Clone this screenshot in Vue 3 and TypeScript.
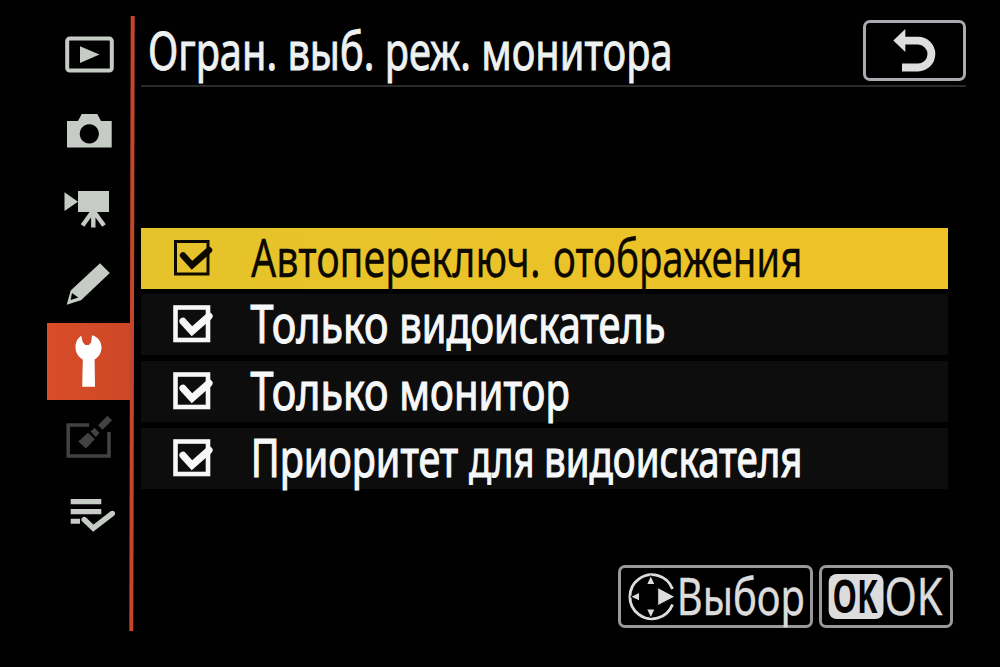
<script setup lang="ts">
interface Word {
  text: string
  x: number
  width: number
}

interface Option {
  id: string
  words: Word[]
  active?: boolean
}

const options: Option[] = [
  {
    id: 'auto',
    active: true,
    words: [
      { text: 'Автопереключ.', x: 4, width: 289.5 },
      { text: 'отображения', x: 306, width: 249.5 },
    ],
  },
  {
    id: 'viewfinder',
    words: [
      { text: 'Только', x: 3.5, width: 138 },
      { text: 'видоискатель', x: 152.3, width: 266 },
    ],
  },
  {
    id: 'monitor',
    words: [
      { text: 'Только', x: 3.5, width: 138 },
      { text: 'монитор', x: 152.3, width: 170.5 },
    ],
  },
  {
    id: 'priority',
    words: [
      { text: 'Приоритет', x: 3.7, width: 207.5 },
      { text: 'для', x: 222, width: 65.5 },
      { text: 'видоискателя', x: 297, width: 258.5 },
    ],
  },
]
</script>

<template>
  <div class="screen">
    <nav class="tabs">
      <div class="tab">
        <svg viewBox="0 0 83 77">
          <rect x="20.2" y="23.6" width="44.6" height="32" rx="2.5" fill="none" stroke="#c6cbc6" stroke-width="4" />
          <path d="M33 31.2L52.5 39.5L33 48Z" />
        </svg>
      </div>
      <div class="tab">
        <svg viewBox="0 0 83 77">
          <path fill-rule="evenodd" d="M20 29H31L34.7 22H50.3L54 29H64.7V55.6H20ZM42.3 32.3a9.6 9.6 0 1 0 .01 0Z" />
        </svg>
      </div>
      <div class="tab">
        <svg viewBox="0 0 83 77">
          <path d="M17.5 23.3V42L31 32.8V22H62V43H31V32.8Z" />
          <path d="M46 42L35.5 56.5M46.3 42V58.5M46.5 42L57 56.5" fill="none" stroke="#c6cbc6" stroke-width="4.4" />
        </svg>
      </div>
      <div class="tab">
        <svg viewBox="0 0 83 77">
          <path fill-rule="evenodd" d="M53 17.2L62.8 27L34 54.3L19.7 58.8L23.7 44.5ZM25 47L23.6 54L31.3 51.5Z" />
        </svg>
      </div>
      <div class="tab selected">
        <svg viewBox="0 0 83 77">
          <path d="M34.2 12.8C30.5 15.2 28.5 19.5 28.5 24C28.5 29.5 31.3 34 35.8 36.5L35.2 63.7H48L47.6 36.5C51.8 34 54.5 29.8 54.5 24.5C54.5 19 51.5 14.3 45 12.3L44.2 19.3L41.8 22H38.3L35.8 19.3Z" />
        </svg>
      </div>
      <div class="tab dim">
        <svg viewBox="0 0 83 77">
          <path d="M42 25H21.2V56H62V32" fill="none" stroke="#424242" stroke-width="3.6" />
          <path d="M53.3 27.6L62.8 18" fill="none" stroke="#424242" stroke-width="6.4" />
          <path d="M47.5 27.7L52.6 33L48.7 36.9L43.6 31.6ZM31.3 41.5L41 32.8L47.8 39.3L39 48.5Z" />
        </svg>
      </div>
      <div class="tab">
        <svg viewBox="0 0 83 77">
          <path d="M23.7 22H54.3V27.3H23.7ZM23.7 32H54.3V37.2H23.7ZM23.7 41.7H33V46.8H23.7Z" />
          <path d="M37.2 42.5L46.3 51.2L65.3 36.5" fill="none" stroke="#c6cbc6" stroke-width="5.4" stroke-linecap="round" />
        </svg>
      </div>
    </nav>
    <div class="divider"></div>

    <main class="panel">
      <header class="head">
        <svg class="title" width="560" height="70">
          <text x="7" y="53.5" textLength="524.5" lengthAdjust="spacingAndGlyphs">Огран. выб. реж. монитора</text>
        </svg>
        <button class="back" aria-label="Назад">
          <svg width="96" height="55" viewBox="866 23.5 96 55">
            <path d="M893.3 41L905.3 29.5V52.5Z" fill="#dededf" />
            <path d="M904 41.2H918A13.4 13.4 0 0 1 918 68H902" fill="none" stroke="#dededf" stroke-width="7.8" />
          </svg>
        </button>
      </header>

      <ul class="list">
        <li v-for="o in options" :key="o.id" class="row" :class="{ active: o.active }">
          <svg class="check" width="46" height="44" viewBox="0 0 46 44">
            <rect class="frame" x="4.5" y="4.5" width="32.5" height="32.5" />
            <path class="mark" d="M12 18.3L21 28.3L38 13.2" />
          </svg>
          <svg class="label" width="640" height="61">
            <text
              v-for="w in o.words"
              :key="w.text"
              :x="w.x"
              y="49"
              :textLength="w.width"
              lengthAdjust="spacingAndGlyphs"
            >{{ w.text }}</text>
          </svg>
        </li>
      </ul>

      <footer class="foot">
        <div class="key select">
          <svg width="189" height="57" viewBox="621 568 189 57">
            <path d="M672.5 589A22 22 0 1 0 672.5 604.5" fill="none" stroke="#dcdcdc" stroke-width="2.9" />
            <g class="arrows">
              <path d="M650.8 575.5L655 584.5H646.6Z" />
              <path d="M650.8 618L655 609H646.6Z" />
              <path d="M630.5 596.7L639.5 592.3V601Z" />
              <path d="M657.7 587.5L675 596.7L657.7 605.7Z" />
            </g>
            <text class="word" x="676.8" y="614.5" textLength="128" lengthAdjust="spacingAndGlyphs">Выбор</text>
          </svg>
        </div>
        <div class="key ok">
          <svg width="128" height="57" viewBox="822 568 128 57">
            <rect x="828.7" y="574" width="54.8" height="45" rx="8" fill="#dcdcdc" />
            <text class="badge" x="832.5" y="613" textLength="45" lengthAdjust="spacingAndGlyphs">OK</text>
            <text class="word" x="884.5" y="614.5" textLength="58" lengthAdjust="spacingAndGlyphs">OK</text>
          </svg>
        </div>
      </footer>
    </main>
  </div>
</template>

<style>
body {
  background: #000;
}
</style>

<style scoped>
.screen {
  box-sizing: border-box;
  width: 1000px;
  height: 667px;
  padding: 15px 0 0 47px;
  display: flex;
  background: #010101;
  overflow: hidden;
  font-family: 'Noto Sans', 'Open Sans', sans-serif;
}
svg {
  overflow: visible;
}
.tabs {
  width: 83px;
  display: flex;
  flex-direction: column;
}
.tab {
  height: 77px;
  fill: #c6cbc6;
}
.tab svg {
  display: block;
  width: 83px;
  height: 77px;
}
.selected {
  background: linear-gradient(90deg, #d94d29, #cc4827);
  fill: #fff;
}
.dim {
  fill: #424242;
}
.divider {
  width: 4px;
  height: 615px;
  margin-top: 1px;
  margin-left: -0.5px;
  background: #c4452a;
  transform: skewX(-0.13deg);
}
.panel {
  margin-left: 7.5px;
  width: 825px;
  display: flex;
  flex-direction: column;
}
.head {
  height: 70px;
  display: flex;
  justify-content: space-between;
  border-bottom: 2px solid #2b2b2c;
}
.title {
  margin-top: 1px;
  fill: #edf1f1;
  stroke: #edf1f1;
  stroke-width: 0.9px;
  font-size: 52px;
}
.back {
  box-sizing: border-box;
  width: 103px;
  height: 61px;
  margin: 5px 0 0;
  padding: 0;
  border: 3px solid #aaaab0;
  border-radius: 7px;
  background: #000;
}
.back svg,
.key svg {
  display: block;
}
.list {
  list-style: none;
  margin: 140.5px 0 0;
  padding: 0;
  width: 807px;
  display: flex;
  flex-direction: column;
  gap: 5.8px;
}
.row {
  height: 61px;
  display: flex;
  background: #0d0d0d;
  fill: #f5f7f8;
  stroke: #f5f7f8;
}
.row.active {
  background: linear-gradient(90deg, #e6c32b, #efc327);
  fill: #0c0900;
  stroke: #0c0900;
}
.check {
  margin: 9px 0 0 30px;
}
.frame {
  fill: none;
  stroke-width: 4.6px;
}
.active .frame {
  stroke-width: 3px;
}
.mark {
  fill: none;
  stroke-width: 7.2px;
  stroke-linecap: round;
}
.active .mark {
  stroke-width: 6.4px;
}
.label {
  margin-left: 30px;
  font-size: 52.5px;
  stroke-width: 1.2px;
}
.active .label {
  stroke-width: 0.3px;
}
.foot {
  display: flex;
  gap: 6px;
  margin: 76.5px 0 0 477px;
}
.key {
  border: 3px solid #99999b;
  border-radius: 7px;
  background: #000;
  fill: #dcdcdc;
}
.arrows {
  stroke: #000;
  stroke-width: 1px;
}
.word {
  font-size: 51px;
  stroke: #dcdcdc;
  stroke-width: 0.4px;
}
.badge {
  fill: #050505;
  font-size: 46px;
  font-weight: 700;
}
</style>
